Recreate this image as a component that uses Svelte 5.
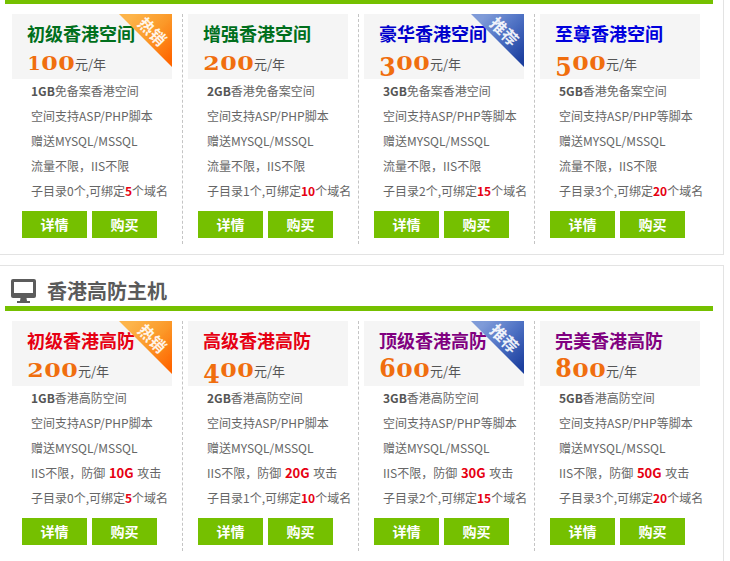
<script>
  const sections = [
    {
      plans: [
        { name: '初级香港空间', color: '#006f1c', price: '100', tag: 'hot', l1: ['1GB', '免备案香港空间'], l2: '空间支持ASP/PHP脚本', l4: '流量不限，IIS不限', dirs: 0, domains: 5 },
        { name: '增强香港空间', color: '#006f1c', price: '200', l1: ['2GB', '香港免备案空间'], l2: '空间支持ASP/PHP脚本', l4: '流量不限，IIS不限', dirs: 1, domains: 10 },
        { name: '豪华香港空间', color: '#0000cc', price: '300', tag: 'rec', l1: ['3GB', '免备案香港空间'], l2: '空间支持ASP/PHP等脚本', l4: '流量不限，IIS不限', dirs: 2, domains: 15 },
        { name: '至尊香港空间', color: '#0000dd', price: '500', l1: ['5GB', '香港免备案空间'], l2: '空间支持ASP/PHP等脚本', l4: '流量不限，IIS不限', dirs: 3, domains: 20 }
      ]
    },
    {
      title: '香港高防主机',
      plans: [
        { name: '初级香港高防', color: '#e60012', price: '200', tag: 'hot', l1: ['1GB', '香港高防空间'], l2: '空间支持ASP/PHP脚本', defense: '10G', dirs: 0, domains: 5 },
        { name: '高级香港高防', color: '#e60012', price: '400', l1: ['2GB', '香港高防空间'], l2: '空间支持ASP/PHP脚本', defense: '20G', dirs: 1, domains: 10 },
        { name: '顶级香港高防', color: '#800080', price: '600', tag: 'rec', l1: ['3GB', '香港高防空间'], l2: '空间支持ASP/PHP等脚本', defense: '30G', dirs: 2, domains: 15 },
        { name: '完美香港高防', color: '#800080', price: '800', l1: ['5GB', '香港高防空间'], l2: '空间支持ASP/PHP等脚本', defense: '50G', dirs: 3, domains: 20 }
      ]
    }
  ];
  const tagText = { hot: '热销', rec: '推荐' };
  // old-style numerals: some digits hang below the line, others rise above it
  const hangs = (d) => '345'.includes(d);
  const rises = (d) => '68'.includes(d);
</script>

{#each sections as section}
  <section class="panel">
    {#if section.title}
      <h2>
        <svg width="25" height="24" viewBox="0 0 25 24">
          <path d="M2 0h21a2 2 0 0 1 2 2v15a2 2 0 0 1-2 2H2a2 2 0 0 1-2-2V2a2 2 0 0 1 2-2z" fill="#5c5c5c" />
          <rect x="3" y="3" width="19" height="11" fill="#fff" />
          <path d="M9.500 19h6l.5 3h3v2H6v-2h3z" fill="#5c5c5c" />
        </svg>
        {section.title}
      </h2>
    {/if}
    <div class="bar"></div>
    <div class="plans">
      {#each section.plans as plan}
        <div class="plan">
          <div class="head">
            <h3 style="color: {plan.color}">{plan.name}</h3>
            <div class="price">
              <span class="num">
                {#each plan.price.split('') as d}
                  <span class="digit" class:hang={hangs(d)} class:rise={rises(d)} class:one={d === '1'}>{d}</span>
                {/each}
              </span>
              <span class="unit">元/年</span>
            </div>
            {#if plan.tag}
              <div class="ribbon {plan.tag}"><span>{tagText[plan.tag]}</span></div>
            {/if}
          </div>
          <ul>
            <li><b>{plan.l1[0]}</b>{plan.l1[1]}</li>
            <li>{plan.l2}</li>
            <li>赠送MYSQL/MSSQL</li>
            {#if plan.defense}
              <li>IIS不限，防御 <b class="red wide">{plan.defense}</b> 攻击</li>
            {:else}
              <li>{plan.l4}</li>
            {/if}
            <li>子目录{plan.dirs}个,可绑定<b class="red">{plan.domains}</b>个域名</li>
          </ul>
          <div class="btns">
            <a href="#detail">详情</a>
            <a href="#buy">购买</a>
          </div>
        </div>
      {/each}
    </div>
  </section>
{/each}

<style>
  :global(body) {
    background: #fff;
    font-family: "Noto Sans CJK SC", "Noto Sans", sans-serif;
    overflow: hidden;
  }
  .panel {
    width: 724px;
    height: 255px;
    box-sizing: border-box;
    border-right: 1px solid #e3e3e3;
    border-bottom: 1px solid #e3e3e3;
    padding-left: 7px;
  }
  .panel + .panel {
    height: 300px;
    margin-top: 10px;
    border-top: 1px solid #e3e3e3;
    border-bottom: 0;
  }
  .bar {
    width: 708px;
    height: 4px;
    margin-left: -2px;
    background: #75c000;
  }
  .panel + .panel .bar {
    height: 5px;
  }
  h2 {
    display: flex;
    align-items: center;
    gap: 11px;
    height: 40px;
    box-sizing: border-box;
    padding-top: 10px;
    margin: 0 0 0 4px;
    font-size: 20px;
    font-weight: bold;
    line-height: 1;
    color: #5a5a5a;
  }
  .plans {
    display: flex;
    padding-top: 10px;
  }
  .plan {
    width: 176px;
    height: 230px;
    box-sizing: border-box;
    padding-left: 5px;
    border-right: 1px dashed #c4c4c4;
  }
  .plan:last-child {
    border-right: 0;
  }
  .head {
    position: relative;
    width: 160px;
    height: 65px;
    padding-left: 15px;
    box-sizing: border-box;
    background: #f5f5f5;
  }
  h3 {
    margin: 0;
    padding-top: 7px;
    font-size: 18px;
    line-height: 24px;
    font-weight: bold;
  }
  .price {
    display: flex;
    align-items: flex-start;
    height: 28px;
  }
  .num {
    display: flex;
    padding-top: 7px;
    color: #f06e0e;
    font-family: "DejaVu Serif", serif;
    font-weight: bold;
    font-size: 19px;
    line-height: 22px;
  }
  .digit {
    display: block;
    width: 17px;
    text-align: center;
    transform: scaleX(1.25);
  }
  .digit.one {
    width: 14px;
    transform: none;
  }
  .digit.hang {
    transform: translateY(3px) scale(1.25, 1.38);
  }
  .digit.rise {
    transform: translateY(-3px) scale(1.25, 1.38);
  }
  .unit {
    padding-top: 10px;
    font-size: 13px;
    line-height: 18px;
    color: #555;
  }
  .ribbon {
    position: absolute;
    top: 0;
    right: 0;
    width: 53px;
    height: 53px;
    clip-path: polygon(0 0, 100% 0, 100% 100%);
  }
  .ribbon.hot {
    background: linear-gradient(135deg, #fdb44a 15%, #fb9a2a 50%, #ff6600 92%);
  }
  .ribbon.rec {
    background: linear-gradient(135deg, #7f9bd8 15%, #4f72c4 50%, #1c3f9e 92%);
  }
  .ribbon span {
    position: absolute;
    top: 8px;
    left: 14px;
    width: 40px;
    text-align: center;
    font-size: 16px;
    line-height: 18px;
    font-weight: bold;
    color: #fff;
    transform: rotate(45deg);
    opacity: 0.9;
  }
  ul {
    list-style: none;
    margin: -1px 0 0;
    padding: 0 0 0 19px;
    font-size: 12px;
    line-height: 25px;
    color: #666;
    white-space: nowrap;
  }
  li b {
    color: #555;
  }
  li b.red {
    color: #e60012;
  }
  li b.wide {
    margin: 0 1px;
    font-size: 13px;
  }
  .btns {
    display: flex;
    gap: 5px;
    padding: 8px 0 0 10px;
  }
  .btns a {
    display: block;
    width: 65px;
    height: 27px;
    background: #75c000;
    color: #fff;
    font-size: 14px;
    font-weight: bold;
    line-height: 27px;
    text-align: center;
    text-decoration: none;
  }
</style>
